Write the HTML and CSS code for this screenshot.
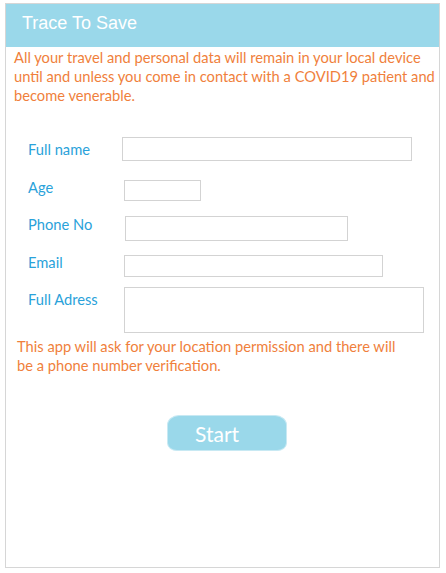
FILE: index.html
```html
<!DOCTYPE html>
<html lang="en">
<head>
    <meta charset="UTF-8">
    <meta name="viewport" content="width=device-width, initial-scale=1.0">
    <title>Trace To Save</title>
    <link rel="stylesheet" href="styles.css">
</head>
<body>
    <div class="frame">
        <header>
            <h1>Trace To Save</h1>
        </header>
        <p class="notice">All your travel and personal data will remain in your local device until and unless you come in contact with a COVID19 patient and become venerable.</p>
        <form class="form">
            <div class="row">
                <label for="full-name">Full name</label>
                <input type="text" id="full-name" class="field field-name">
            </div>
            <div class="row">
                <label for="age">Age</label>
                <input type="text" id="age" class="field field-age">
            </div>
            <div class="row">
                <label for="phone">Phone No</label>
                <input type="text" id="phone" class="field field-phone">
            </div>
            <div class="row">
                <label for="email">Email</label>
                <input type="text" id="email" class="field field-email">
            </div>
            <div class="row row-address">
                <label for="address">Full Adress</label>
                <textarea id="address" class="field field-address"></textarea>
            </div>
        </form>
        <p class="notice notice-bottom">This app will ask for your location permission and there will be a phone number verification.</p>
        <button class="start-button">Start</button>
    </div>
</body>
</html>
```

FILE: styles.css
```css
body {
    margin: 0;
    padding: 0;
    background-color: white;
    font-family: Lato, "Open Sans", sans-serif;
}
.frame {
    box-sizing: border-box;
    width: 435px;
    height: 565px;
    margin: 3px 0 0 5px;
    border: 1px solid #d6d6d6;
}
header {
    background-color: #9ad8ea;
    height: 43px;
    padding: 7px 0 0 16px;
    box-sizing: border-box;
}
header h1 {
    margin: 0;
    font-family: "Liberation Sans", Arial, sans-serif;
    font-weight: normal;
    font-size: 18px;
    line-height: 24px;
    color: white;
}
.notice {
    margin: 1px 0 0 0;
    padding: 0 0 0 8px;
    font-size: 14.7px;
    line-height: 19px;
    color: #f07f3c;
}
.form {
    margin-top: 26px;
}
.row {
    display: flex;
    align-items: flex-start;
    height: 37.5px;
    padding-left: 22px;
}
.row label {
    width: 96px;
    flex-shrink: 0;
    margin-top: 8px;
    font-size: 14.7px;
    line-height: 20px;
    color: #2aa2da;
}
.row-address {
    height: 52px;
}
.field {
    box-sizing: border-box;
    border: 1px solid #d3d3d3;
    padding: 0;
    margin: 0;
    background: white;
    resize: none;
    outline: none;
}
.field-name {
    width: 290px;
    height: 24px;
    margin-left: -2px;
    margin-top: 6px;
}
.field-age {
    width: 77px;
    height: 21px;
    margin-top: 11.5px;
}
.field-phone {
    width: 223px;
    height: 25px;
    margin-left: 1px;
    margin-top: 10px;
}
.field-email {
    width: 259px;
    height: 22px;
    margin-top: 11.5px;
}
.field-address {
    width: 300px;
    height: 46px;
    margin-top: 6px;
}
.notice-bottom {
    width: 385px;
    margin-top: 4px;
    padding-left: 11px;
    line-height: 18.5px;
}
.start-button {
    display: block;
    width: 120px;
    height: 36px;
    margin: 41px 0 0 161px;
    padding: 0;
    border: 1px solid #c8e9f3;
    border-radius: 12px 12px 10px 10px / 10px 10px 8px 8px;
    background-color: #9ad8ea;
    color: white;
    font-family: Lato, "Open Sans", sans-serif;
    font-size: 21px;
    text-align: left;
    text-indent: 27px;
    cursor: pointer;
}
```
